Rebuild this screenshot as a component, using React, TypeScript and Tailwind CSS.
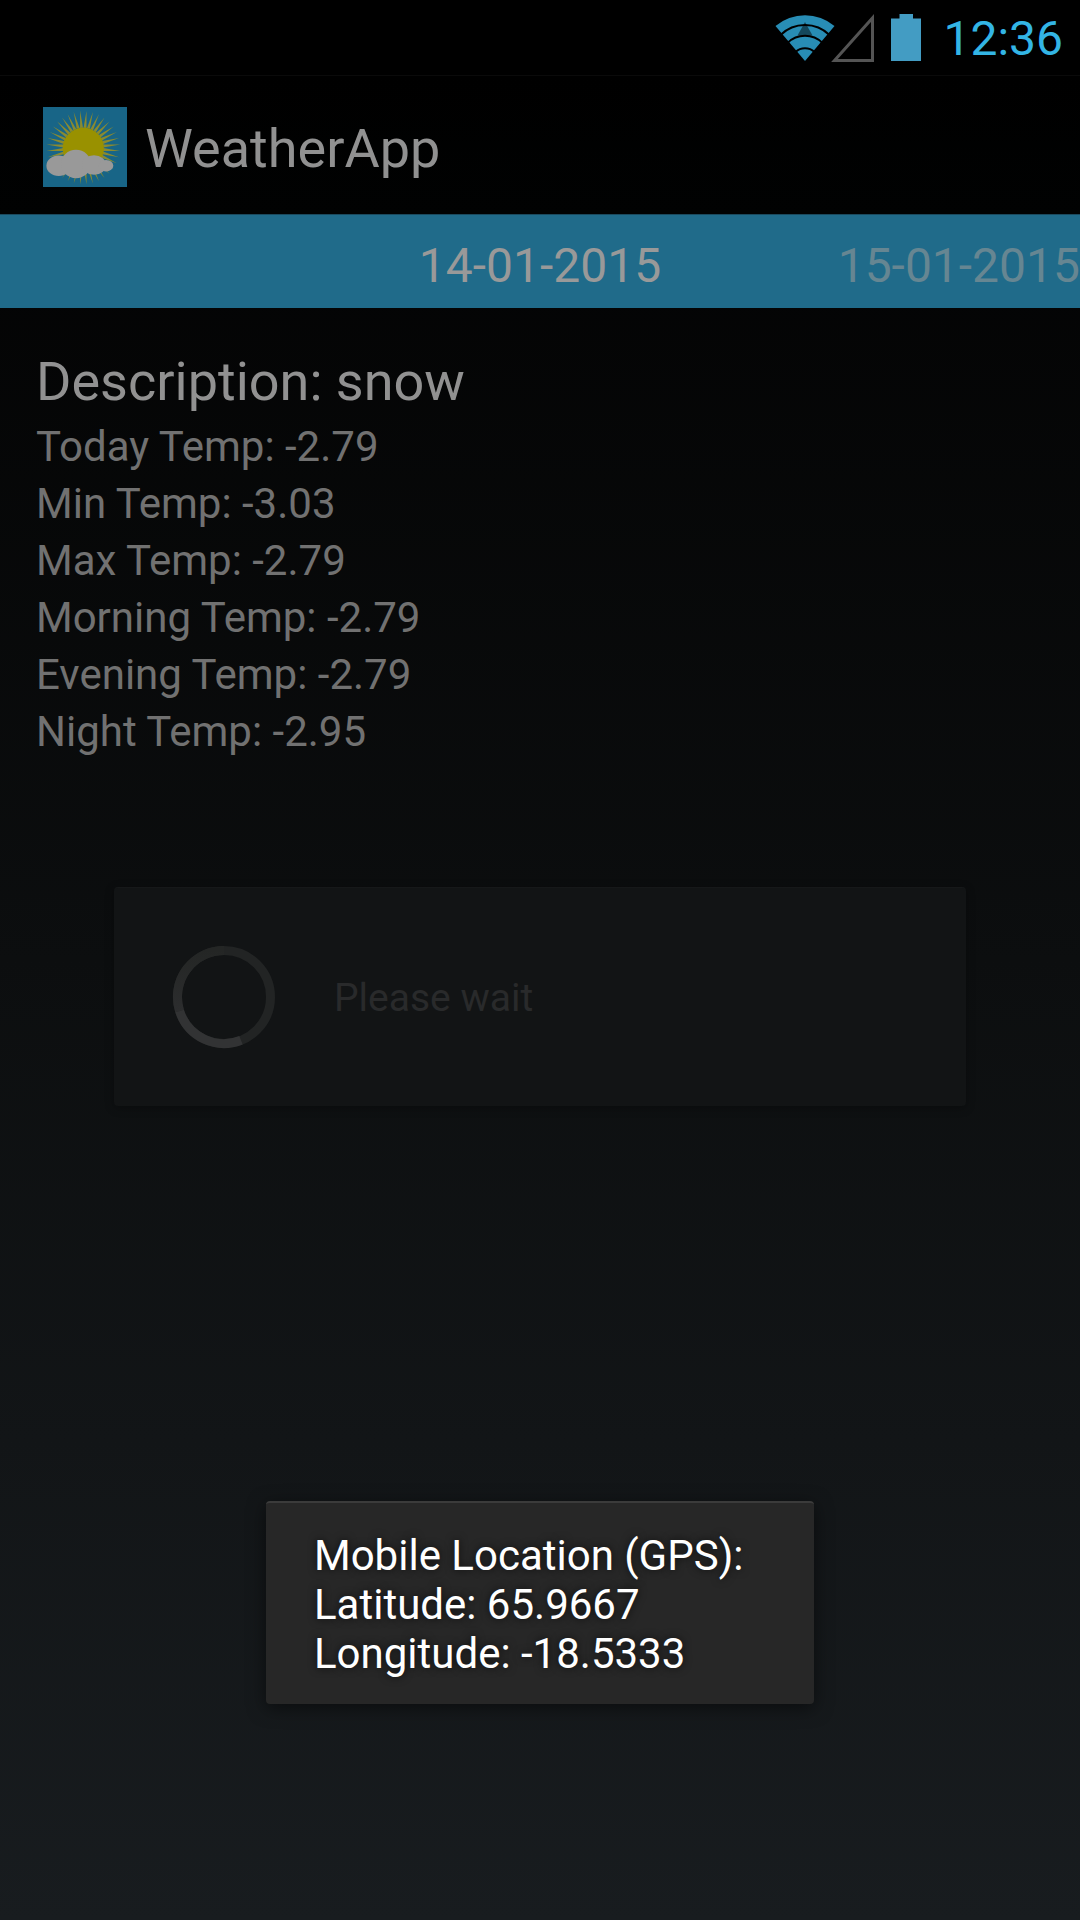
const temperatures = [
  ["Today Temp", "-2.79"],
  ["Min Temp", "-3.03"],
  ["Max Temp", "-2.79"],
  ["Morning Temp", "-2.79"],
  ["Evening Temp", "-2.79"],
  ["Night Temp", "-2.95"],
];

const RAY_COUNT = 36;

function rayPoints(index: number) {
  const step = (2 * Math.PI) / RAY_COUNT;
  const angle = (index + 0.5) * step;
  const at = (r: number, a: number) =>
    `${(40.3 + r * Math.sin(a)).toFixed(2)},${(40.7 - r * Math.cos(a)).toFixed(2)}`;
  return [at(20, angle - step * 0.42), at(37, angle), at(20, angle + step * 0.42)].join(" ");
}

function WeatherLogo() {
  return (
    <svg viewBox="0 0 84 80" className="h-20 w-[84px]" aria-hidden="true">
      <rect width="84" height="80" fill="#186587" />
      <g fill="#8a8a30">
        {Array.from({ length: RAY_COUNT }, (_, i) => (
          <polygon key={i} points={rayPoints(i)} />
        ))}
      </g>
      <circle cx="40.3" cy="41.2" r="20.6" fill="#999100" />
      <g fill="#999999">
        <ellipse cx="15.7" cy="58.7" rx="12.3" ry="10.3" />
        <ellipse cx="33" cy="57" rx="15" ry="14.2" />
        <ellipse cx="51" cy="58" rx="12" ry="9.8" />
        <ellipse cx="63" cy="58.7" rx="7.3" ry="5.8" />
      </g>
    </svg>
  );
}

function WifiIcon() {
  return (
    <svg viewBox="0 0 60 48" className="h-12 w-[60px]" aria-hidden="true">
      <path d="M30 47 L0.5 12 A46 46 0 0 1 59.5 12 Z" fill="#288db5" />
      <path d="M30 8 L37.5 21.5 H22.5 Z" fill="#14485c" />
      <g fill="none" stroke="#000" strokeWidth="2">
        <path d="M5.5 21 A35 35 0 0 1 54.5 21" />
        <path d="M12.5 29 A25 25 0 0 1 47.5 29" />
        <path d="M20.5 38 A14 14 0 0 1 39.5 38" />
      </g>
    </svg>
  );
}

function SignalIcon() {
  return (
    <svg viewBox="0 0 44 48" className="-ml-1 h-12 w-11" aria-hidden="true">
      <path d="M3.5 46.5 H41.5 V4 Z" fill="none" stroke="#545454" strokeWidth="3" />
    </svg>
  );
}

function BatteryIcon() {
  return (
    <svg viewBox="0 0 30 48" className="ml-4 h-12 w-[30px]" aria-hidden="true">
      <path d="M0 4.5 H8.5 V0 H22 V4.5 H30 V47 H0 Z" fill="#439cc3" />
    </svg>
  );
}

function Spinner() {
  return (
    <svg viewBox="0 0 104 104" className="size-[104px]" aria-hidden="true">
      <defs>
        <linearGradient id="fade" x1="0" y1="0" x2="0" y2="1">
          <stop offset="0" stopColor="#242625" />
          <stop offset="1" stopColor="#2c2d2e" />
        </linearGradient>
      </defs>
      <circle cx="52" cy="52" r="46.5" fill="none" stroke="#222424" strokeWidth="9" />
      <path d="M52 5.5 A46.5 46.5 0 0 0 7.6 66" fill="none" stroke="url(#fade)" strokeWidth="9" />
      <path d="M7.6 66 A46.5 46.5 0 0 0 69 95.3" fill="none" stroke="#323334" strokeWidth="9" />
    </svg>
  );
}

export default function App() {
  return (
    <div className="relative flex min-h-screen flex-col overflow-hidden bg-linear-to-b/srgb from-black via-[#0c0e0f] to-[#181c1f] font-[Roboto,sans-serif]">
      <div className="flex h-[75px] items-center justify-end bg-black pr-[17px]">
        <WifiIcon />
        <SignalIcon />
        <BatteryIcon />
        <time className="ml-[22px] pt-[3px] text-5xl text-[#33b5e5]">12:36</time>
      </div>

      <header className="flex h-[139px] items-center border-t border-[#0a0a0a] bg-linear-to-b/srgb from-black to-[#010202] pt-1 pr-4 pl-[43px]">
        <WeatherLogo />
        <h1 className="ml-[18px] pt-1 text-[54px] leading-16 text-[#919191]">WeatherApp</h1>
      </header>

      <nav className="grid h-[94px] grid-cols-3 items-center border-t border-[#1b4a5e] bg-[#206b8a] pt-2 text-5xl">
        <button type="button" className="col-start-2 justify-self-center text-[#999999]">
          14-01-2015
        </button>
        <button type="button" className="justify-self-end text-[#668692]">
          15-01-2015
        </button>
      </nav>

      <main className="px-9 pt-[42px]">
        <h2 className="text-[54px] leading-16 text-[#919191]">Description: snow</h2>
        <ul className="pt-1 text-[42px] leading-[57px] text-[#717171]">
          {temperatures.map(([label, value]) => (
            <li key={label}>
              {label}: {value}
            </li>
          ))}
        </ul>
      </main>

      <div
        role="dialog"
        aria-label="Please wait"
        className="absolute inset-x-[114px] top-[887px] flex h-[219px] items-center rounded-sm border-t border-[#161819] bg-[#121415] pl-[58px] shadow-[0_2px_10px_rgba(0,0,0,0.3)]"
      >
        <Spinner />
        <p className="ml-[58px] pt-[3px] text-[39px] text-[#292a2b]">Please wait</p>
      </div>

      <div
        role="status"
        className="absolute bottom-[216px] left-1/2 w-[548px] -translate-x-1/2 rounded-sm border-t-2 border-[#3b3b3b] bg-[#272727] px-12 pt-7 pb-[26px] text-[42px] leading-[49px] text-white shadow-[0_4px_18px_rgba(0,0,0,0.5)] text-shadow-[0_0_8px_rgba(0,0,0,0.7)]"
      >
        <p>Mobile Location (GPS):</p>
        <p>Latitude: 65.9667</p>
        <p>Longitude: -18.5333</p>
      </div>
    </div>
  );
}
